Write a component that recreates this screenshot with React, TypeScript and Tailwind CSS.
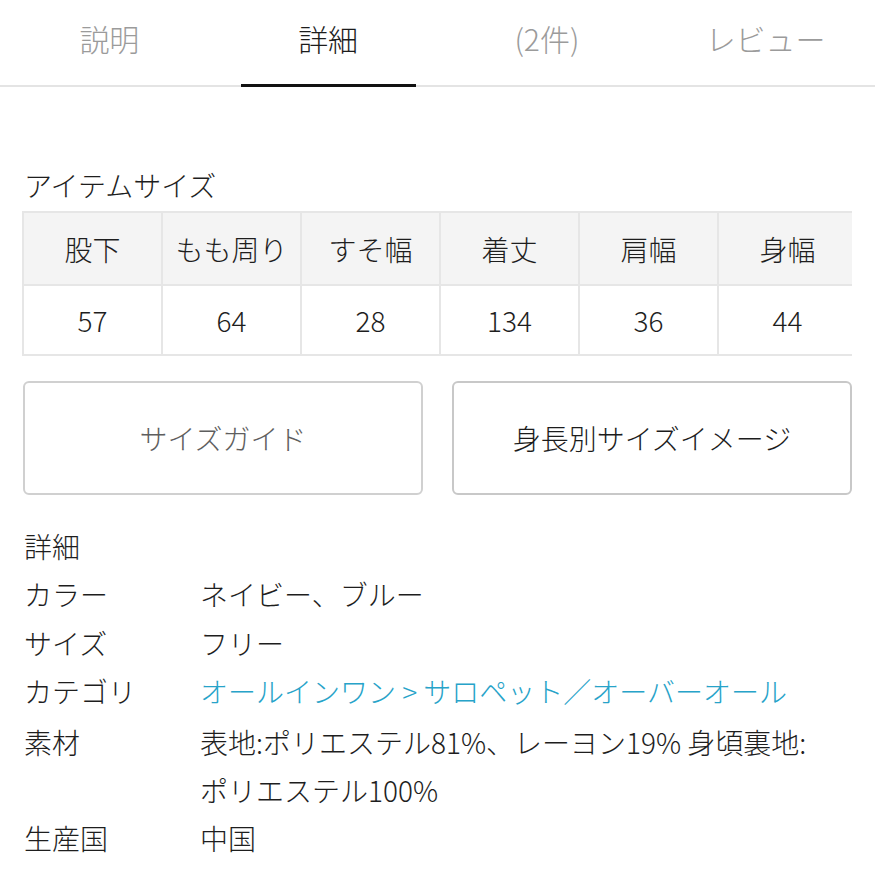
const tabs = [
  { label: '説明', active: false },
  { label: '詳細', active: true },
  { label: '(2件)', active: false },
  { label: 'レビュー', active: false },
];

const sizeCols = [
  { name: '股下', value: '57' },
  { name: 'もも周り', value: '64' },
  { name: 'すそ幅', value: '28' },
  { name: '着丈', value: '134' },
  { name: '肩幅', value: '36' },
  { name: '身幅', value: '44' },
];

export default function App() {
  return (
    <div className="w-[875px] h-[875px] overflow-hidden bg-white text-[#1e1e1e] font-light font-['Noto_Sans_CJK_JP',sans-serif]">
      {/* tabs */}
      <div className="flex border-b-2 border-[#e4e4e4]">
        {tabs.map((t) => (
          <div key={t.label} className="flex-1 flex flex-col items-center">
            <div
              className={`mt-[18px] h-[40px] leading-[40px] text-[30px] ${
                t.active ? 'text-[#1c1c1c]' : 'text-[#9b9b9b]'
              }`}
            >
              {t.label}
            </div>
            <div className={`mt-[26px] h-[3px] w-[175px] -mb-[2px] ${t.active ? 'bg-[#111]' : 'bg-transparent'}`} />
          </div>
        ))}
      </div>

      <div className="px-[22px]">
        <h3 className="mt-[80px] text-[28px] leading-[36px] pl-[2px]">アイテムサイズ</h3>

        {/* size table */}
        <div className="mt-[8px] w-[830px] overflow-hidden">
          <div className="flex w-[840px]">
            {sizeCols.map((c) => (
              <div key={c.name} className="w-[139px] shrink-0 flex flex-col">
                <div className="h-[73px] border-t-2 border-l-2 border-[#e6e6e6] bg-[#f4f4f4] flex items-center justify-center text-[28px]">
                  {c.name}
                </div>
                <div className="h-[72px] border-t-2 border-b-2 border-l-2 border-[#e6e6e6] flex items-center justify-center text-[28px]">
                  {c.value}
                </div>
              </div>
            ))}
          </div>
        </div>

        {/* buttons */}
        <div className="mt-[25px] flex gap-[29px] pl-[1px]">
          <button className="w-[400px] h-[114px] rounded-[6px] border-2 border-[#d0d0d0] bg-white text-[28px] text-[#5e5e5e]">
            サイズガイド
          </button>
          <button className="w-[400px] h-[114px] rounded-[6px] border-2 border-[#c8c8c8] bg-white text-[28px] text-[#1c1c1c]">
            身長別サイズイメージ
          </button>
        </div>

        {/* details */}
        <div className="mt-[27px] text-[28px] leading-[48.4px] pl-[2px]">
          <div>詳細</div>
          <div className="grid grid-cols-[176px_1fr]">
            <div>カラー</div>
            <div>ネイビー、ブルー</div>
            <div>サイズ</div>
            <div>フリー</div>
            <div>カテゴリ</div>
            <div className="text-[#27a3c9]">オールインワン&nbsp;&gt;&nbsp;サロペット／オーバーオール</div>
            <div className="pt-[2px]">素材</div>
            <div className="pt-[2px]">
              表地:ポリエステル81%、レーヨン19% 身頃裏地:
              <br />
              ポリエステル100%
            </div>
            <div>生産国</div>
            <div>中国</div>
          </div>
        </div>
      </div>
    </div>
  );
}
